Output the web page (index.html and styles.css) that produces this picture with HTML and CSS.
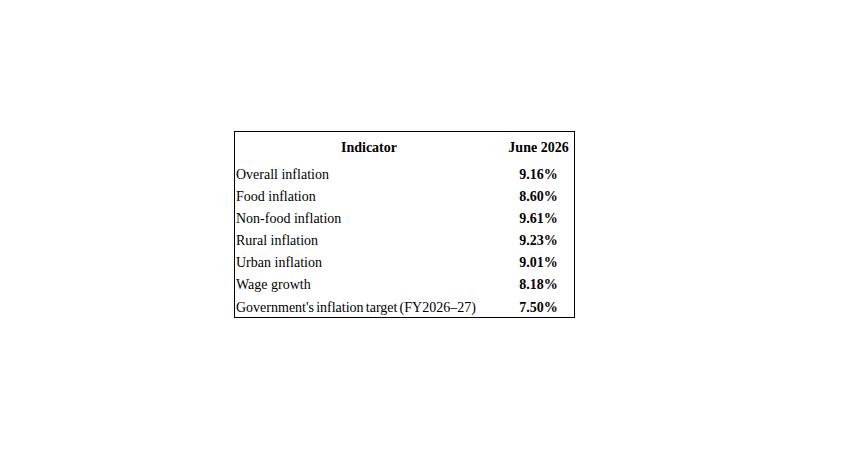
FILE: index.html
```html
<!DOCTYPE html>
<html>
<head>
<meta charset="utf-8">
<link rel="stylesheet" href="styles.css">
</head>
<body>
<div class="page">
  <table class="data">
    <thead>
      <tr><th class="ind">Indicator</th><th class="val">June 2026</th></tr>
    </thead>
    <tbody>
      <tr><td>Overall inflation</td><td class="num">9.16%</td></tr>
      <tr><td>Food inflation</td><td class="num">8.60%</td></tr>
      <tr><td>Non-food inflation</td><td class="num">9.61%</td></tr>
      <tr><td>Rural inflation</td><td class="num">9.23%</td></tr>
      <tr><td>Urban inflation</td><td class="num">9.01%</td></tr>
      <tr><td>Wage growth</td><td class="num">8.18%</td></tr>
      <tr><td class="tight">Government's inflation target (FY2026–27)</td><td class="num">7.50%</td></tr>
    </tbody>
  </table>
</div>
</body>
</html>
```

FILE: styles.css
```css
html, body {
  margin: 0;
  padding: 0;
  background: #fff;
}
.page {
  width: 850px;
  height: 450px;
  padding: 131px 0 0 234px;
  box-sizing: border-box;
}
.data {
  border-collapse: collapse;
  border: 1px solid #000;
  font-family: "Liberation Serif", "Times New Roman", serif;
  font-size: 14px;
  color: #000;
  width: 341px;
}
.data th {
  font-weight: bold;
  text-align: center;
  height: 28px;
  padding: 2px 0 0 0;
  line-height: 16px;
  vertical-align: middle;
}
.data th.ind { width: 268px; }
.data td {
  height: 19.17px;
  padding: 3px 0 0 1px;
  line-height: 16px;
  vertical-align: middle;
  white-space: nowrap;
}
.data td.num {
  text-align: center;
  font-weight: bold;
  padding: 3px 0 0 0;
}
.data td.tight {
  word-spacing: -1.3px;
}
```
